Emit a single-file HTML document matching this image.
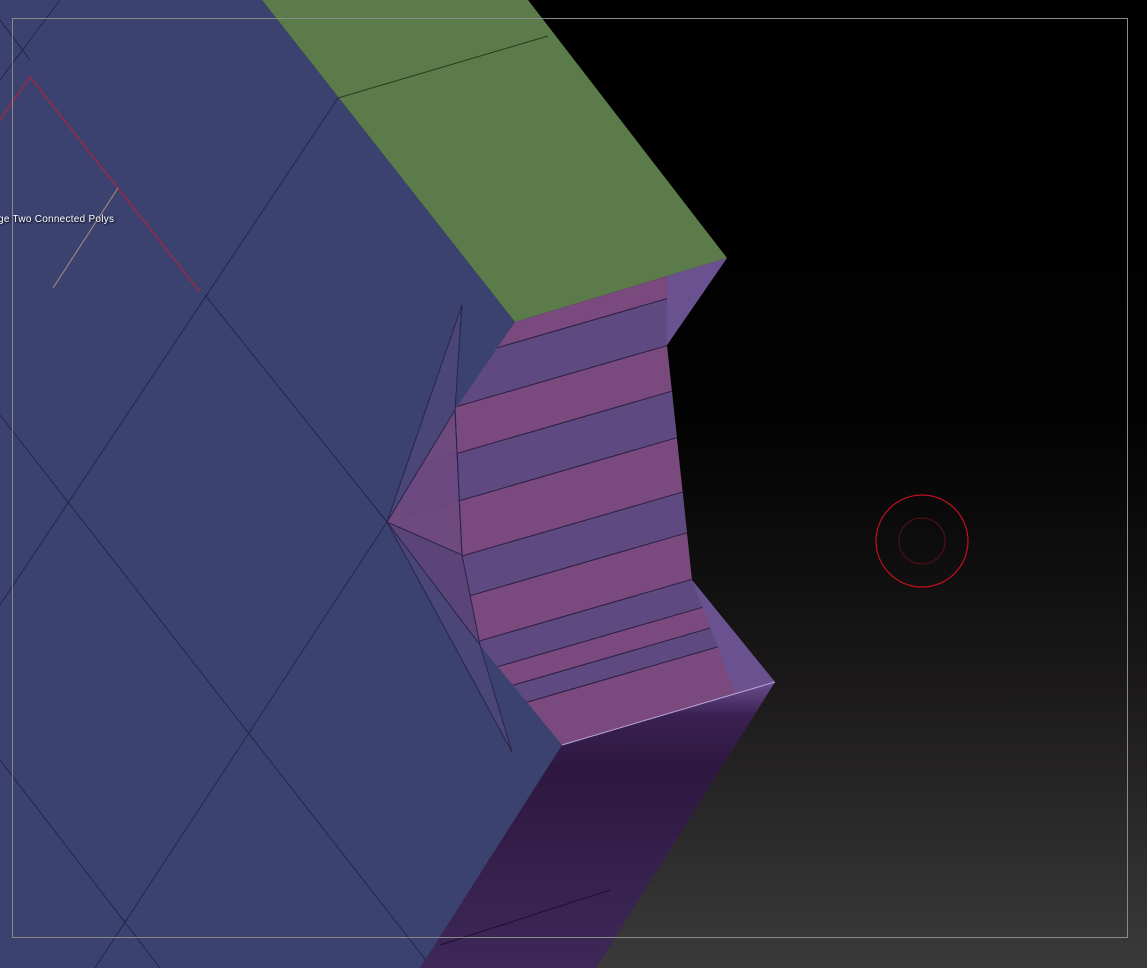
<!DOCTYPE html>
<html><head><meta charset="utf-8"><style>
html,body{margin:0;padding:0;background:#000;}
svg{display:block;}
</style></head><body>
<svg width="1147" height="968" viewBox="0 0 1147 968" xmlns="http://www.w3.org/2000/svg">
<defs>
<linearGradient id="bg" x1="0" y1="0" x2="0" y2="1">
<stop offset="0" stop-color="#000"/>
<stop offset="0.43" stop-color="#020202"/>
<stop offset="0.7" stop-color="#1a1819"/>
<stop offset="1" stop-color="#3b3a3a"/>
</linearGradient>
<linearGradient id="bot" x1="0" y1="0" x2="0" y2="1">
<stop offset="0" stop-color="#6a4e90"/>
<stop offset="0.12" stop-color="#3a2050"/>
<stop offset="0.3" stop-color="#2e1840"/>
<stop offset="1" stop-color="#3e2858"/>
</linearGradient>
<clipPath id="pk"><polygon points="515,322 727,258 667,345 692,580 775,682 562,745 480,645 387,522 455,410"/></clipPath>
</defs>
<rect width="1147" height="968" fill="url(#bg)"/>
<polygon points="0,0 262,0 515,322 387,522 562,745 432,968 0,968" fill="#3b4270"/>
<g stroke="#22264a" stroke-width="1" fill="none">
<line x1="338" y1="98" x2="0" y2="605"/>
<line x1="387" y1="522" x2="95" y2="968"/>
<line x1="205" y1="295" x2="387" y2="522"/>
<line x1="0" y1="415" x2="432" y2="968"/>
<line x1="0" y1="760" x2="160" y2="968"/>
<line x1="60" y1="0" x2="0" y2="80"/>
<line x1="0" y1="20" x2="30" y2="60"/>
</g>
<polygon points="262,0 528,0 727,258 515,322" fill="#5b7c4a"/>
<line x1="338" y1="98" x2="548" y2="36" stroke="#2a3a22" stroke-width="1"/>
<g clip-path="url(#pk)">
<rect x="380" y="240" width="420" height="520" fill="#7a4a7e"/>
<g fill="#5e4a80">
<polygon points="400,376 800,260 800,307 400,423"/>
<polygon points="400,470 800,354 800,402 400,518"/>
<polygon points="400,574 800,458 800,500 400,616"/>
<polygon points="400,664 800,548 800,579 400,695"/>
<polygon points="400,718 800,602 800,623 400,739"/>
</g>
<g stroke="#2c2040" stroke-width="1">
<line x1="400" y1="376" x2="800" y2="260"/>
<line x1="400" y1="423" x2="800" y2="307"/>
<line x1="400" y1="470" x2="800" y2="354"/>
<line x1="400" y1="518" x2="800" y2="402"/>
<line x1="400" y1="574" x2="800" y2="458"/>
<line x1="400" y1="616" x2="800" y2="500"/>
<line x1="400" y1="664" x2="800" y2="548"/>
<line x1="400" y1="695" x2="800" y2="579"/>
<line x1="400" y1="718" x2="800" y2="602"/>
<line x1="400" y1="739" x2="800" y2="623"/>
</g>
<polygon points="667,272 727,258 667,345" fill="#6a5290"/>
<polygon points="692,580 775,682 735,692" fill="#6a5290"/>
</g>
<polygon points="387,522 455,410 462,555" fill="#6e4a80" opacity="0.9"/>
<polygon points="387,522 462,555 480,645" fill="#5a4478"/>
<polygon points="387,522 460,310 455,410" fill="#4a4678"/>
<polygon points="387,522 480,645 512,752" fill="#4a4678"/>
<g stroke="#2a2448" stroke-width="1" fill="none">
<polyline points="387,522 455,410 462,555 387,522 480,645"/>
<line x1="455" y1="410" x2="462" y2="305"/>
<line x1="480" y1="645" x2="512" y2="752"/>
<line x1="387" y1="522" x2="462" y2="305"/>
<line x1="387" y1="522" x2="512" y2="752"/>
<line x1="462" y1="555" x2="480" y2="645"/>
<line x1="455" y1="410" x2="462" y2="555"/>
</g>
<polygon points="562,745 775,682 596,968 420,968" fill="url(#bot)"/>
<line x1="562" y1="745" x2="775" y2="682" stroke="#b9a6e0" stroke-width="1"/>
<line x1="440" y1="945" x2="610" y2="890" stroke="#1e1030" stroke-width="1"/>
<polyline points="0,120 30,77 200,292" fill="none" stroke="#9a2848" stroke-width="1.5"/>
<line x1="118" y1="188" x2="53" y2="288" stroke="#b08a80" stroke-width="1"/>
<text x="-2" y="222" font-family="Liberation Sans, sans-serif" font-size="10" fill="#fff" textLength="116" style="text-shadow:1px 1px 2px #000">ge Two Connected Polys</text>
<rect x="12.5" y="18.5" width="1115" height="919" fill="none" stroke="#8a8a8a" stroke-width="1"/>
<ellipse cx="922" cy="541" rx="46" ry="46" fill="none" stroke="#c01020" stroke-width="1.2"/>
<ellipse cx="922" cy="541" rx="23" ry="23" fill="none" stroke="#5a1018" stroke-width="1"/>
</svg>
</body></html>
